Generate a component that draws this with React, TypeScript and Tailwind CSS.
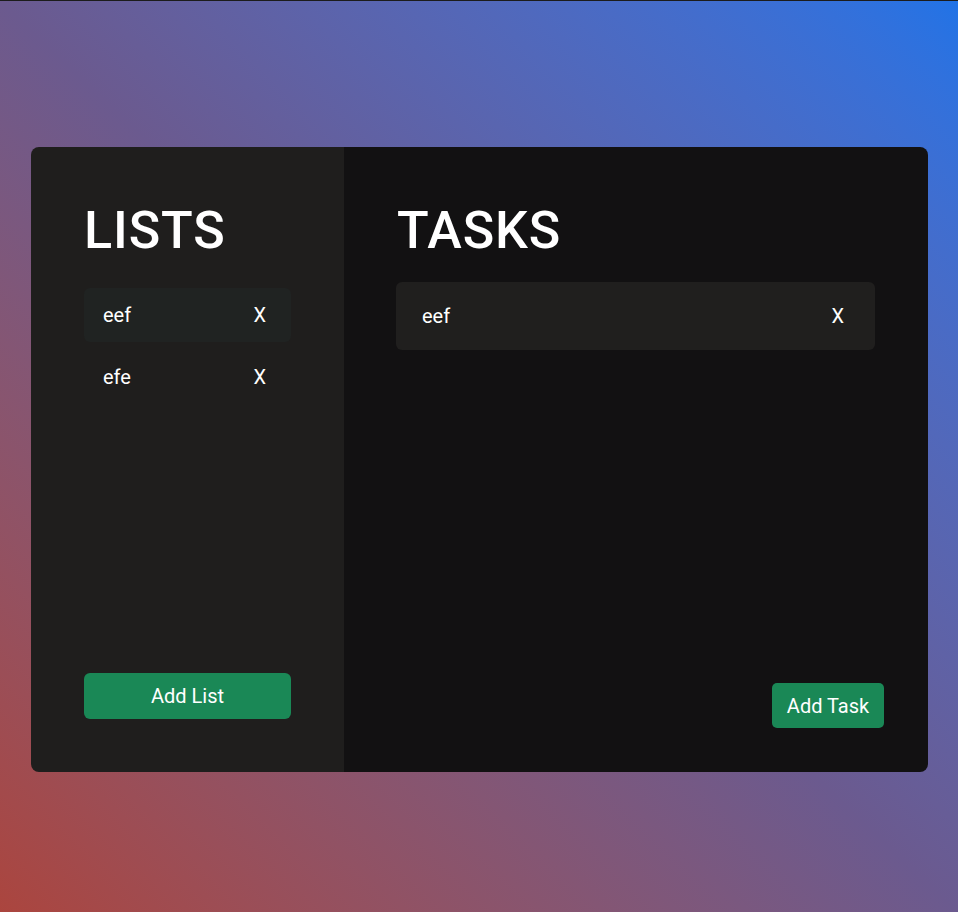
import React from 'react';

const lists = [
  { id: 1, name: 'eef', active: true },
  { id: 2, name: 'efe', active: false },
];

const tasks = [{ id: 1, name: 'eef' }];

export default function App() {
  return (
    <div
      className="h-[912px] w-full border-t border-[#1c1c1c] bg-linear-to-tr from-[#ab453e] via-[#6b5a8f] to-[#2173e6] pt-[146px] pl-[31px] pr-[30px]"
      style={{ fontFamily: 'Roboto, "Liberation Sans", sans-serif' }}
    >
      <div className="flex h-[625px] w-[897px] overflow-hidden rounded-lg">
        {/* lists column */}
        <div className="flex w-[313px] flex-col bg-[#1f1e1d] p-[53px]">
          <h1 className="text-[52px] font-[550] leading-[61px] tracking-[0.018em] text-white">LISTS</h1>
          <div className="mt-[27px] flex flex-col gap-2">
            {lists.map(l => (
              <div
                key={l.id}
                className={`flex h-[54px] items-center justify-between rounded-md pl-[19px] pr-[25px] text-xl text-white ${l.active ? 'bg-[#202322]' : ''}`}
              >
                <span>{l.name}</span>
                <span>X</span>
              </div>
            ))}
          </div>
          <div className="flex-1" />
          <button className="h-[46px] w-full rounded-md bg-[#1a8856] text-xl text-white">Add List</button>
        </div>

        {/* tasks column */}
        <div className="flex flex-1 flex-col bg-[#121112] pt-[53px] pl-[52px] pr-[44px] pb-[44px]">
          <h1 className="ml-px text-[52px] font-[550] leading-[61px] tracking-[0.018em] text-white">TASKS</h1>
          <div className="mt-[21px] mr-[9px] flex flex-col gap-2">
            {tasks.map(t => (
              <div
                key={t.id}
                className="flex h-[68px] items-center justify-between rounded-md bg-[#201f1e] pl-[26px] pr-[31px] text-xl text-white"
              >
                <span>{t.name}</span>
                <span>X</span>
              </div>
            ))}
          </div>
          <div className="flex-1" />
          <div className="flex justify-end">
            <button className="h-[45px] w-[112px] rounded-[5px] bg-[#1a8856] text-xl text-white">Add Task</button>
          </div>
        </div>
      </div>
    </div>
  );
}
